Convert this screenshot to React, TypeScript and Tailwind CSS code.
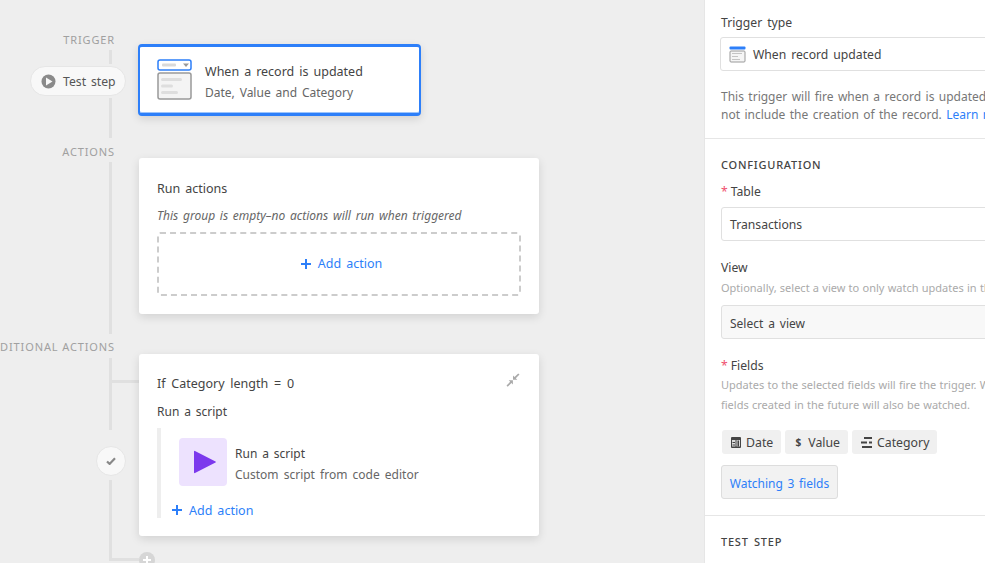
import React from 'react';

const RecordIcon = () => (
  <svg width="36" height="42" viewBox="0 0 36 42" fill="none">
    <rect x="1" y="1" width="33" height="10" rx="2" fill="#fff" stroke="#2d7ff9" strokeWidth="1.5" />
    <rect x="5" y="4.5" width="14" height="3" rx="1" fill="#d9d9d9" />
    <path d="M26 4.5h6l-3 3.5z" fill="#999" />
    <rect x="1" y="14" width="33" height="26" rx="2" fill="#f4f4f4" stroke="#999" strokeWidth="1.5" />
    <rect x="4" y="19" width="21" height="3" rx="1.5" fill="#dedede" />
    <rect x="4" y="25.5" width="12" height="3" rx="1.5" fill="#dedede" />
    <rect x="4" y="32" width="17" height="3" rx="1.5" fill="#dedede" />
  </svg>
);

const SmallRecordIcon = () => (
  <svg width="17" height="17" viewBox="0 0 17 17" fill="none">
    <rect x="0.5" y="0.5" width="16" height="3" rx="1" fill="#2d7ff9" />
    <rect x="1" y="5" width="15" height="11" rx="1" fill="#f5f5f5" stroke="#999" />
    <rect x="3" y="7" width="10" height="1" fill="#c4c4c4" />
    <rect x="3" y="10" width="6" height="1" fill="#c4c4c4" />
    <rect x="3" y="13" width="8" height="1" fill="#c4c4c4" />
  </svg>
);

const Plus = () => (
  <svg width="10" height="10" viewBox="0 0 10 10">
    <path d="M4 0h2v4h4v2H6v4H4V6H0V4h4z" fill="#2d7ff9" />
  </svg>
);

const Chip = ({ icon, label, gap }: { icon: React.ReactNode; label: string; gap: string }) => (
  <div className={`flex h-[24px] items-center rounded-[3px] bg-[#f0f0f0] pl-[9px] pr-[8px] text-[12.3px] text-[#444] ${gap}`}>
    {icon}
    <span className="pt-[3px]">{label}</span>
  </div>
);

const Label = ({ children, required }: { children: string; required?: boolean }) => (
  <div className="h-[18px] text-[12.2px] leading-[18px] text-[#444]">
    {required && <span className="mr-[3px] text-[#f0506e]">*</span>}
    {children}
  </div>
);

const SectionTitle = ({ children }: { children: string }) => (
  <div className="text-[11px] font-medium leading-[16px] tracking-[0.07em] text-[#444]">{children}</div>
);

const Input = ({ children, className }: { children: React.ReactNode; className: string }) => (
  <div className={`flex h-[34px] items-center rounded-[3px] border border-[#e0e0e0] px-[8px] pt-[3px] text-[#444] ${className}`}>
    {children}
  </div>
);

const RailLabel = ({ children }: { children: string }) => (
  <div className="h-[16px] whitespace-nowrap pr-[24px] text-right text-[11px] leading-[16px] tracking-[0.08em] text-[#a0a0a0] [word-spacing:0px]">
    {children}
  </div>
);

const Line = ({ className }: { className: string }) => <div className={`w-[3px] bg-[#e0e0e0] ${className}`} />;

export default function App() {
  return (
    <div className="flex h-[563px] w-[985px] overflow-hidden bg-white font-['Noto_Sans','Open_Sans',sans-serif] [word-spacing:1.75px]">
      {/* Canvas */}
      <div className="flex w-[704px] shrink-0 flex-col bg-[#eeeeee] pt-[45px]">
        {/* Trigger */}
        <div className="flex h-[70px] shrink-0">
          <div className="relative flex w-[139px] shrink-0 flex-col items-end">
            <div className="absolute right-0 top-[-13px] flex w-[139px] flex-col items-end">
              <RailLabel>TRIGGER</RailLabel>
              <Line className="mr-[27px] mt-[2px] h-[14px]" />
            </div>
            <div className="absolute left-[30px] top-[21px] flex h-[30px] w-[96px] items-center gap-[7px] rounded-full border border-[#e6e6e6] bg-[#f8f8f8] pl-[10px] text-[12.2px] text-[#555]">
              <svg width="15" height="15" viewBox="0 0 15 15">
                <circle cx="7.5" cy="7.5" r="7" fill="#8a8a8a" />
                <path d="M5 3.5l6.5 4-6.5 4z" fill="#f8f8f8" />
              </svg>
              <span className="pt-[2px]">Test step</span>
            </div>
            <div className="absolute right-0 top-[53px] flex w-[139px] flex-col items-end">
              <Line className="mr-[27px] h-[40px]" />
            </div>
          </div>
          <div className="-ml-[1px] -mt-[1px] flex h-[72px] w-[283px] items-center rounded-[4px] border-2 border-b-[3px] border-t-[3px] border-[#2d7ff9] bg-white pl-[17px] shadow-[0_3px_8px_rgba(0,0,0,0.12),inset_0_-1px_0_#9cc4fc]">
            <RecordIcon />
            <div className="ml-[12px] pt-[3px]">
              <div className="text-[12.5px] leading-[21px] text-[#444]">When a record is updated</div>
              <div className="text-[12px] leading-[21px] text-[#666]">Date, Value and Category</div>
            </div>
          </div>
        </div>

        {/* Actions */}
        <div className="mt-[43px] flex h-[156px] shrink-0">
          <div className="relative w-[139px] shrink-0">
            <div className="absolute right-0 top-[-14px] flex h-[190px] w-[139px] flex-col items-end">
              <RailLabel>ACTIONS</RailLabel>
              <Line className="mr-[27px] mt-[2px] flex-1" />
            </div>
          </div>
          <div className="w-[400px] rounded-[3px] bg-white px-[18px] pt-[21px] shadow-[0_3px_10px_rgba(0,0,0,0.12)]">
            <div className="text-[12.5px] leading-[20px] text-[#444]">Run actions</div>
            <div className="mt-[7px] text-[12px] italic leading-[20px] text-[#666] [word-spacing:1.6px]">
              This group is empty–no actions will run when triggered
            </div>
            <div className="mt-[6px] flex h-[64px] items-center justify-center gap-[7px] rounded-[3px] border-2 border-dashed border-[#cccccc] pl-[5px] text-[12.5px] text-[#2d7ff9]">
              <Plus />
              <span className="pt-[1px]">Add action</span>
            </div>
          </div>
        </div>

        {/* Conditional actions */}
        <div className="mt-[40px] flex h-[182px] shrink-0">
          <div className="relative w-[139px] shrink-0">
            <div className="absolute right-0 top-[-15px] flex h-[91px] w-[139px] flex-col items-end">
              <RailLabel>CONDITIONAL ACTIONS</RailLabel>
              <Line className="mr-[27px] mt-[3px] flex-1" />
            </div>
            <div className="absolute left-[112px] top-[26px] h-[3px] w-[29px] bg-[#e0e0e0]" />
            <div className="absolute left-[96px] top-[92px] flex h-[30px] w-[30px] items-center justify-center rounded-full border border-[#e6e6e6] bg-[#f8f8f8]">
              <svg width="10" height="8" viewBox="0 0 10 8">
                <path d="M1 4.5l2.6 2.4L9 1.2" fill="none" stroke="#888" strokeWidth="2.2" />
              </svg>
            </div>
            <div className="absolute left-[109px] top-[126px] h-[81px] w-[3px] bg-[#e0e0e0]" />
            <div className="absolute left-[109px] top-[204px] h-[3px] w-[30px] bg-[#e0e0e0]" />
            <div className="absolute left-[139px] top-[198px] flex h-[16px] w-[16px] items-center justify-center rounded-full bg-[#d6d6d6]">
              <svg width="10" height="10" viewBox="0 0 10 10">
                <path d="M4 1h2v3h3v2H6v3H4V6H1V4h3z" fill="#fff" />
              </svg>
            </div>
          </div>
          <div className="relative w-[400px] rounded-[3px] bg-white px-[18px] pt-[20px] shadow-[0_3px_10px_rgba(0,0,0,0.12)]">
            <div className="text-[12.5px] leading-[20px] text-[#444] [word-spacing:2.5px]">If Category length = 0</div>
            <svg className="absolute right-[19px] top-[19px]" width="14" height="14" viewBox="0 0 14 14">
              <path d="M13.5 1.5L9.8 5.2l1.5 1.5H7V2.6l1.5 1.5L12.2.4zM.5 12.5l3.7-3.7-1.5-1.5H6.9v4.2l-1.5-1.5-3.7 3.7z" fill="#aaa" />
            </svg>
            <div className="mt-[8px] text-[12px] leading-[20px] text-[#444]">Run a script</div>
            <div className="mt-[6px] h-[90px] border-l-[4px] border-[#eeeeee] pt-[10px]">
              <div className="flex h-[48px] items-center pl-[18px]">
                <div className="flex h-[48px] w-[48px] items-center justify-center rounded-[4px] bg-[#ede2fe]">
                  <svg width="26" height="24" viewBox="0 0 26 24">
                    <path d="M4 1.5v21a0.6 0.6 0 0 0 1 .5l20.5-10.5a0.6 0.6 0 0 0 0-1L5 1a0.6 0.6 0 0 0-1 .5z" fill="#7c39ed" />
                  </svg>
                </div>
                <div className="ml-[8px] pt-[3px]">
                  <div className="text-[12px] leading-[21px] text-[#444]">Run a script</div>
                  <div className="text-[12px] leading-[21px] text-[#666] [word-spacing:2px]">Custom script from code editor</div>
                </div>
              </div>
              <div className="mt-[14px] flex h-[20px] items-center gap-[7px] pl-[11px] text-[12.5px] text-[#2d7ff9]">
                <Plus />
                <span className="pt-[2px]">Add action</span>
              </div>
            </div>
          </div>
        </div>
      </div>

      {/* Side panel */}
      <div className="w-[520px] shrink-0 border-l border-[#e6e6e6]">
        <div className="h-[139px] border-b border-[#e6e6e6] px-[16px] pt-[14px]">
          <Label>Trigger type</Label>
          <div className="-ml-[1px] mt-[5px] flex h-[34px] items-center gap-[7px] rounded-[3px] border border-[#e0e0e0] px-[8px] text-[12.2px] text-[#444]">
            <SmallRecordIcon />
            <span className="pt-[3px]">When record updated</span>
          </div>
          <div className="mt-[17px] whitespace-nowrap text-[12px] leading-[18px] text-[#777] [word-spacing:1.3px]">
            <div>This trigger will fire when a record is updated. This does</div>
            <div>
              not include the creation of the record. <span className="text-[#2d7ff9]">Learn more</span>
            </div>
          </div>
        </div>

        <div className="h-[377px] border-b border-[#e6e6e6] px-[16px] pt-[18px]">
          <SectionTitle>CONFIGURATION</SectionTitle>
          <div className="mt-[10px]">
            <Label required>Table</Label>
          </div>
          <div className="mt-[6px]">
            <Input className="text-[12.2px]">Transactions</Input>
          </div>
          <div className="mt-[18px]">
            <Label>View</Label>
          </div>
          <div className="mt-[2px] whitespace-nowrap text-[11px] leading-[18px] text-[#aaa] [word-spacing:0.4px]">
            Optionally, select a view to only watch updates in this view
          </div>
          <div className="mt-[8px]">
            <Input className="bg-[#f8f8f8] text-[12px]">Select a view</Input>
          </div>
          <div className="mt-[18px]">
            <Label required>Fields</Label>
          </div>
          <div className="whitespace-nowrap text-[11px] leading-[20px] text-[#aaa] [word-spacing:0.4px]">
            <div>Updates to the selected fields will fire the trigger. When all fields are watched,</div>
            <div>fields created in the future will also be watched.</div>
          </div>
          <div className="ml-[1px] mt-[15px] flex gap-[4px]">
            <Chip
              label="Date"
              gap="gap-[5px]"
              icon={
                <svg width="10" height="11" viewBox="0 0 10 11">
                  <rect width="10" height="11" rx="1" fill="#444" />
                  <rect x="1" y="3" width="3.5" height="6.5" fill="#ddd" />
                  <rect x="5.5" y="3" width="3.5" height="6.5" fill="#ddd" />
                  <rect x="6.5" y="3.5" width="1.5" height="6" fill="#444" />
                  <rect x="1.5" y="5" width="2.5" height="1" fill="#444" />
                  <rect x="1.5" y="7.5" width="2.5" height="1" fill="#444" />
                </svg>
              }
            />
            <Chip
              label="Value"
              gap="gap-[6px]"
              icon={<span className="w-[8px] text-center text-[10px] font-bold leading-[11px] text-[#444]">$</span>}
            />
            <Chip
              label="Category"
              gap="gap-[5px]"
              icon={
                <svg width="11" height="11" viewBox="0 0 11 11">
                  <path d="M3 0h8v2H3zM0 4.5h6v2H0zM8 4.5h3v2H8zM1 9h10v2H1z" fill="#444" />
                </svg>
              }
            />
          </div>
          <div className="mt-[11px] flex h-[34px] w-[117px] items-center justify-center rounded-[3px] border border-[#dddddd] bg-[#f2f2f2] pt-[3px] text-[12px] text-[#2d7ff9] [word-spacing:1.5px]">
            Watching 3 fields
          </div>
        </div>

        <div className="px-[16px] pt-[18px]">
          <SectionTitle>TEST STEP</SectionTitle>
        </div>
      </div>
    </div>
  );
}
